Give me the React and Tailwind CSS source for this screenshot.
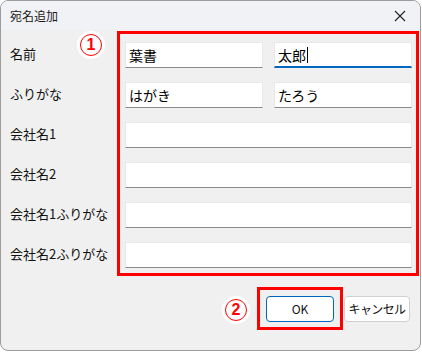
const JP = { fontFamily: '"Noto Sans CJK JP", "Noto Sans", sans-serif' }

const ROWS = [
  { label: '名前', pair: ['葉書', '太郎'] },
  { label: 'ふりがな', pair: ['はがき', 'たろう'] },
  { label: '会社名1' },
  { label: '会社名2' },
  { label: '会社名1ふりがな' },
  { label: '会社名2ふりがな' },
]

function Field({ value = '', focused = false, className = '' }) {
  return (
    <div
      className={`h-[26px] bg-white border border-[#e8e8e8] flex items-center pl-[3px] text-[14px] text-black leading-none ${
        focused ? 'border-b-2 border-b-[#0067c0]' : 'border-b-[#8a8a8a]'
      } ${className}`}
    >
      <span>{value}</span>
      {focused && <span className="w-px h-[16px] bg-black ml-px" />}
    </div>
  )
}

function Marker({ n, className }) {
  return (
    <div className={`absolute w-[28px] h-[28px] rounded-full bg-white flex items-center justify-center ${className}`}>
      <div className="w-[22px] h-[22px] rounded-full border-[1.5px] border-[#ff0000] flex items-center justify-center text-[#ff0000] text-[16px] font-bold leading-none"
        style={{ fontFamily: '"Liberation Sans", Arial, sans-serif' }}>
        {n}
      </div>
    </div>
  )
}

export default function App() {
  return (
    <div className="w-[422px] h-[352px] bg-white" style={JP}>
      <div className="relative w-[421px] h-[351px] rounded-lg border border-[#9c9c9c] bg-[#f0f0f0] overflow-hidden">
        {/* title bar */}
        <div className="h-[29px] bg-[#f1f2f5] flex items-center justify-between pl-[9px] pr-[10px]">
          <span className="text-[12px] text-[#1a1a1a]">宛名追加</span>
          <svg width="12" height="12" viewBox="0 0 12 12" className="mr-[4px]">
            <path d="M1 1L11 11M11 1L1 11" stroke="#222" strokeWidth="1.1" />
          </svg>
        </div>

        {/* form */}
        <div className="flex">
          <div className="w-[116px] pl-[9px] pt-[12px] flex flex-col gap-[14px]">
            {ROWS.map((r) => (
              <div key={r.label} className="h-[26px] flex items-center pb-[3px] text-[13px] text-[#111] whitespace-nowrap">
                {r.label}
              </div>
            ))}
          </div>
          <div className="mt-px w-[302px] border-[3px] border-[#ff0000] pt-[8px] pl-[5px] pr-[4px] pb-[5px] flex flex-col gap-[14px]">
            {ROWS.map((r, i) =>
              r.pair ? (
                <div key={r.label} className="grid grid-cols-2 gap-x-[11px]">
                  <Field value={r.pair[0]} />
                  <Field value={r.pair[1]} focused={i === 0} />
                </div>
              ) : (
                <Field key={r.label} />
              )
            )}
          </div>
        </div>

        {/* buttons */}
        <div className="mt-[11px] flex justify-end items-center pr-[10px]">
          <div className="border-[3px] border-[#ff0000] px-[6px] pt-[6px] pb-[5px]">
            <div className="w-[68px] h-[26px] bg-white border border-[#0067c0] rounded-[4px] flex items-center justify-center text-[12px] text-[#111]">
              OK
            </div>
          </div>
          <div className="ml-px w-[66px] h-[26px] bg-white border border-[#d0d0d0] rounded-[4px] flex items-center justify-center text-[12px] text-[#111] tracking-[-0.6px]">
            キャンセル
          </div>
        </div>

        <Marker n="1" className="left-[76px] top-[30px]" />
        <Marker n="2" className="left-[221px] top-[295px]" />
      </div>
    </div>
  )
}
